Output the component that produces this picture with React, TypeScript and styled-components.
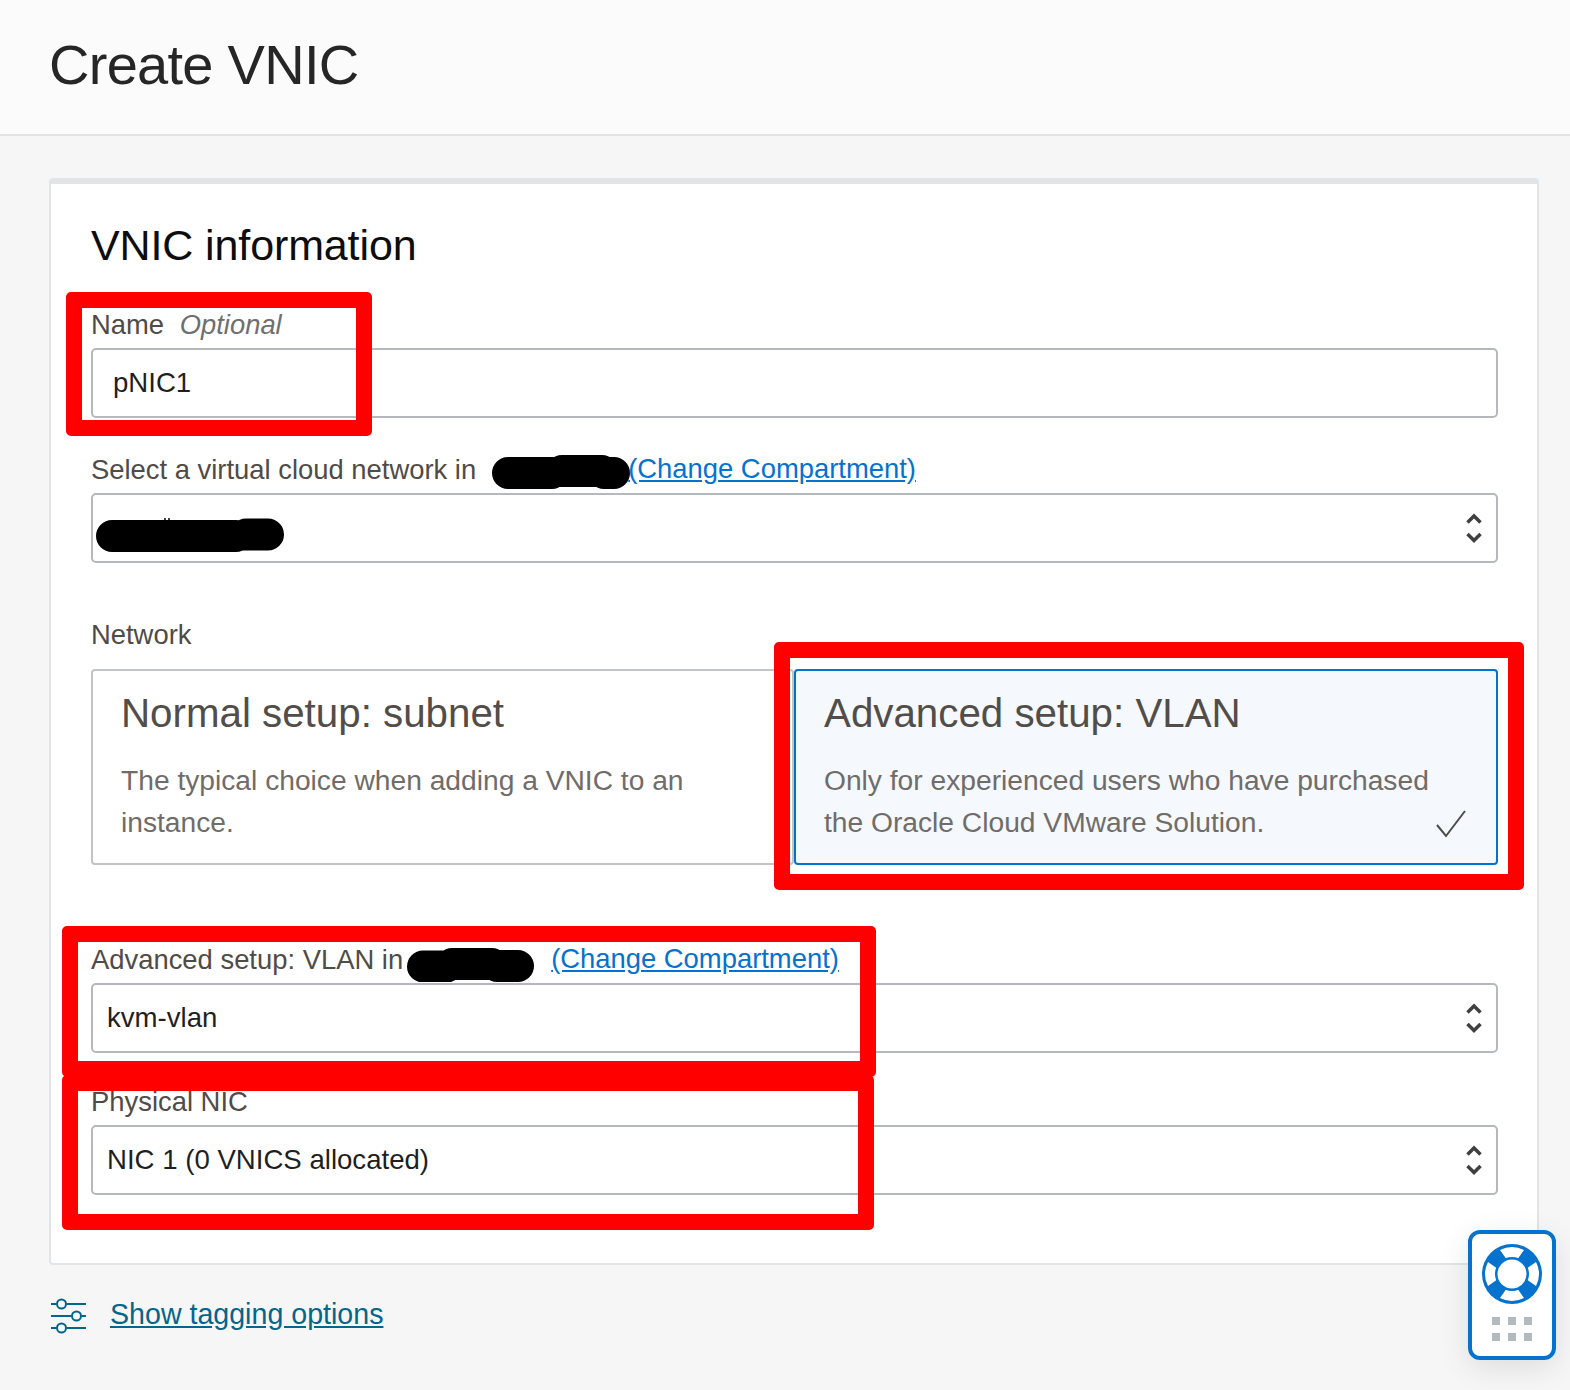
import type { ReactNode } from "react";
import styled, { createGlobalStyle } from "styled-components";

const GlobalStyle = createGlobalStyle`
  html, body { margin: 0; padding: 0; background: #f6f6f6; }
  body { font-family: "Liberation Sans", Arial, sans-serif; }
`;

function Chevrons() {
  return (
    <ChevronIcon width="22" height="34" viewBox="0 0 22 34" fill="none" stroke="#3f3f3f" strokeWidth="3.5">
      <path d="M4.5 11.5 L11 5 L17.5 11.5" />
      <path d="M4.5 23 L11 29.5 L17.5 23" />
    </ChevronIcon>
  );
}

function Blob({ width, d, children }: { width: number; d: string; children?: ReactNode }) {
  return (
    <BlobIcon width={width} height={34} viewBox={`0 0 ${width} 34`} fill="none" stroke="#000" strokeWidth="32" strokeLinecap="round" strokeLinejoin="round">
      <path d={d} />
      {children}
    </BlobIcon>
  );
}

function LifeBuoy() {
  const bands = [0, 90, 180, 270];
  return (
    <svg width="62" height="62" viewBox="0 0 62 62">
      <circle cx="31" cy="31" r="30" fill="#0572ce" />
      {bands.map((r) => (
        <path key={r} d="M19 7 A26.5 26.5 0 0 1 43 7 L36 17 A16 16 0 0 0 26 17 Z" fill="#fff" transform={`rotate(${r} 31 31)`} />
      ))}
      <circle cx="31" cy="31" r="17" fill="#0572ce" />
      <circle cx="31" cy="31" r="14.5" fill="#fff" />
    </svg>
  );
}

function App() {
  return (
    <>
      <GlobalStyle />
      <Page>
        <Header>
          <Title>Create VNIC</Title>
        </Header>
        <Body>
          <Card>
            <SectionTitle>VNIC information</SectionTitle>
            <Label>
              Name <Optional>Optional</Optional>
            </Label>
            <Control>pNIC1</Control>

            <Label $top={37}>
              Select a virtual cloud network in
              <BlobSlot $left={16} $top={4}>
                <Blob width={138} d="M16 18 H60 M70 16 H110 M112 18 H122" />
              </BlobSlot>
              <ChangeLink $left={-2}>(Change Compartment)</ChangeLink>
            </Label>
            <Control>
              <ControlBlob>
                <Blob width={188} d="M16 18 H140 M150 16.5 H172">
                  <path d="M69 0 V3 M73 0 V3" strokeWidth="1.5" strokeLinecap="butt" />
                </Blob>
              </ControlBlob>
              <Chevrons />
            </Control>

            <Label $top={57}>Network</Label>
            <TileRow>
              <Tile>
                <TileTitle>Normal setup: subnet</TileTitle>
                <TileText>The typical choice when adding a VNIC to an instance.</TileText>
              </Tile>
              <Tile $selected>
                <TileTitle>Advanced setup: VLAN</TileTitle>
                <TileText>Only for experienced users who have purchased the Oracle Cloud VMware Solution.</TileText>
                <CheckMark width="32" height="28" viewBox="0 0 32 28" fill="none" stroke="#4f4b47" strokeWidth="2">
                  <path d="M2 15 L11 26 L30 1" />
                </CheckMark>
              </Tile>
            </TileRow>

            <Label $top={80}>
              Advanced setup: VLAN in
              <BlobSlot $left={4} $top={10}>
                <Blob width={127} d="M16 18.5 H40 M45 16 H85 M90 18 H111" />
              </BlobSlot>
              <ChangeLink $left={17}>(Change Compartment)</ChangeLink>
            </Label>
            <Control $pad={14}>
              kvm-vlan
              <Chevrons />
            </Control>

            <Label $top={34}>Physical NIC</Label>
            <Control $pad={14}>
              NIC 1 (0 VNICS allocated)
              <Chevrons />
            </Control>
          </Card>
          <TagRow>
            <TagIcon width="36" height="36" viewBox="0 0 36 36" fill="none" stroke="#04668d" strokeWidth="2">
              <path d="M0 6 H5.5 M15.5 6 H35 M0 18 H20.5 M30.5 18 H35 M0 30 H5.5 M15.5 30 H35" />
              <circle cx="10.5" cy="6" r="4.5" />
              <circle cx="25.5" cy="18" r="4.5" />
              <circle cx="10.5" cy="30" r="4.5" />
            </TagIcon>
            <TagLink>Show tagging options</TagLink>
          </TagRow>
        </Body>

        <RedBox $x={66} $y={292} $w={306} $h={144} />
        <RedBox $x={774} $y={642} $w={750} $h={248} />
        <RedBox $x={62} $y={926} $w={814} $h={151} />
        <RedBox $x={62} $y={1075} $w={812} $h={155} />

        <HelpWidget>
          <LifeBuoy />
          <DotGrid>
            {[0, 1, 2, 3, 4, 5].map((i) => (
              <Dot key={i} />
            ))}
          </DotGrid>
        </HelpWidget>
      </Page>
    </>
  );
}

export default App;

const Page = styled.div`
  position: relative;
  width: 1570px;
  height: 1390px;
  overflow: hidden;
`;
const Header = styled.div`
  height: 134px;
  background: #fbfbfb;
  border-bottom: 2px solid #e4e4e4;
  padding-left: 49px;
`;
const Title = styled.h1`
  margin: 0;
  font-size: 56px;
  font-weight: 400;
  line-height: 130px;
  letter-spacing: -0.72px;
  color: #262626;
`;
const Body = styled.div`
  padding: 42px 0 0 49px;
`;
const Card = styled.div`
  box-sizing: border-box;
  width: 1490px;
  height: 1087px;
  background: #fff;
  border: 2px solid #e1e5e8;
  border-top-width: 6px;
  border-radius: 4px;
  padding: 36px 39px 0 40px;
`;
const SectionTitle = styled.h2`
  margin: 0 0 40px;
  font-size: 43px;
  font-weight: 400;
  line-height: 50px;
  letter-spacing: -0.12px;
  color: #0d0d0d;
`;
const Label = styled.div<{ $top?: number }>`
  margin-top: ${(p) => p.$top ?? 0}px;
  display: flex;
  align-items: center;
  height: 30px;
  font-size: 27.4px;
  line-height: 30px;
  color: #4f4b47;
  white-space: pre;
`;
const Optional = styled.i`
  margin-left: 8px;
  color: #6f6f6f;
`;
const ChangeLink = styled.a<{ $left?: number }>`
  margin-left: ${(p) => p.$left ?? 0}px;
  margin-bottom: 2px;
  color: #0572ce;
  text-decoration: underline;
`;
const BlobSlot = styled.span<{ $left: number; $top: number }>`
  display: inline-flex;
  margin-left: ${(p) => p.$left}px;
  margin-top: ${(p) => p.$top}px;
`;
const BlobIcon = styled.svg`
  display: block;
`;
const Control = styled.div<{ $pad?: number }>`
  box-sizing: border-box;
  display: flex;
  align-items: center;
  justify-content: space-between;
  height: 70px;
  margin-top: 8px;
  padding: 0 11px 0 ${(p) => p.$pad ?? 20}px;
  background: #fff;
  border: 2px solid #b5b9be;
  border-radius: 5px;
  font-size: 27.6px;
  color: #1f1f1f;
`;
const ControlBlob = styled.div`
  margin: 14px 0 0 -17px;
`;
const ChevronIcon = styled.svg`
  display: block;
  margin-left: auto;
`;
const TileRow = styled.div`
  display: grid;
  grid-template-columns: 703px 704px;
  margin-top: 19px;
`;
const Tile = styled.div<{ $selected?: boolean }>`
  position: relative;
  box-sizing: border-box;
  height: 196px;
  padding: 20px 30px 0 28px;
  background: ${(p) => (p.$selected ? "#f5f8fd" : "#fff")};
  border: 2px solid ${(p) => (p.$selected ? "#0572ce" : "#c1c4c8")};
  border-radius: 4px;
`;
const TileTitle = styled.div`
  font-size: 40.3px;
  line-height: 46px;
  color: #524d49;
`;
const TileText = styled.div`
  margin-top: 22px;
  font-size: 28.2px;
  line-height: 42px;
  color: #6f6c69;
`;
const CheckMark = styled.svg`
  position: absolute;
  right: 29px;
  bottom: 25px;
`;
const TagRow = styled.div`
  display: flex;
  align-items: center;
  gap: 23px;
  margin-top: 29px;
  padding-left: 2px;
`;
const TagIcon = styled.svg`
  margin-top: 4px;
`;
const TagLink = styled.a`
  font-size: 28.6px;
  color: #04668d;
  text-decoration: underline;
`;
const RedBox = styled.div<{ $x: number; $y: number; $w: number; $h: number }>`
  position: absolute;
  box-sizing: border-box;
  left: ${(p) => p.$x}px;
  top: ${(p) => p.$y}px;
  width: ${(p) => p.$w}px;
  height: ${(p) => p.$h}px;
  border: 16px solid #fe0000;
  border-radius: 5px;
`;
const HelpWidget = styled.div`
  position: absolute;
  box-sizing: border-box;
  left: 1468px;
  top: 1230px;
  width: 88px;
  height: 130px;
  display: flex;
  flex-direction: column;
  align-items: center;
  padding-top: 9px;
  gap: 12px;
  background: #fff;
  border: 4px solid #0572ce;
  border-radius: 12px;
  box-shadow: 0 8px 30px rgba(0, 0, 0, 0.1);
`;
const DotGrid = styled.div`
  display: grid;
  grid-template-columns: repeat(3, 8px);
  gap: 8px;
`;
const Dot = styled.span`
  width: 8px;
  height: 8px;
  background: #b5b9c0;
`;
